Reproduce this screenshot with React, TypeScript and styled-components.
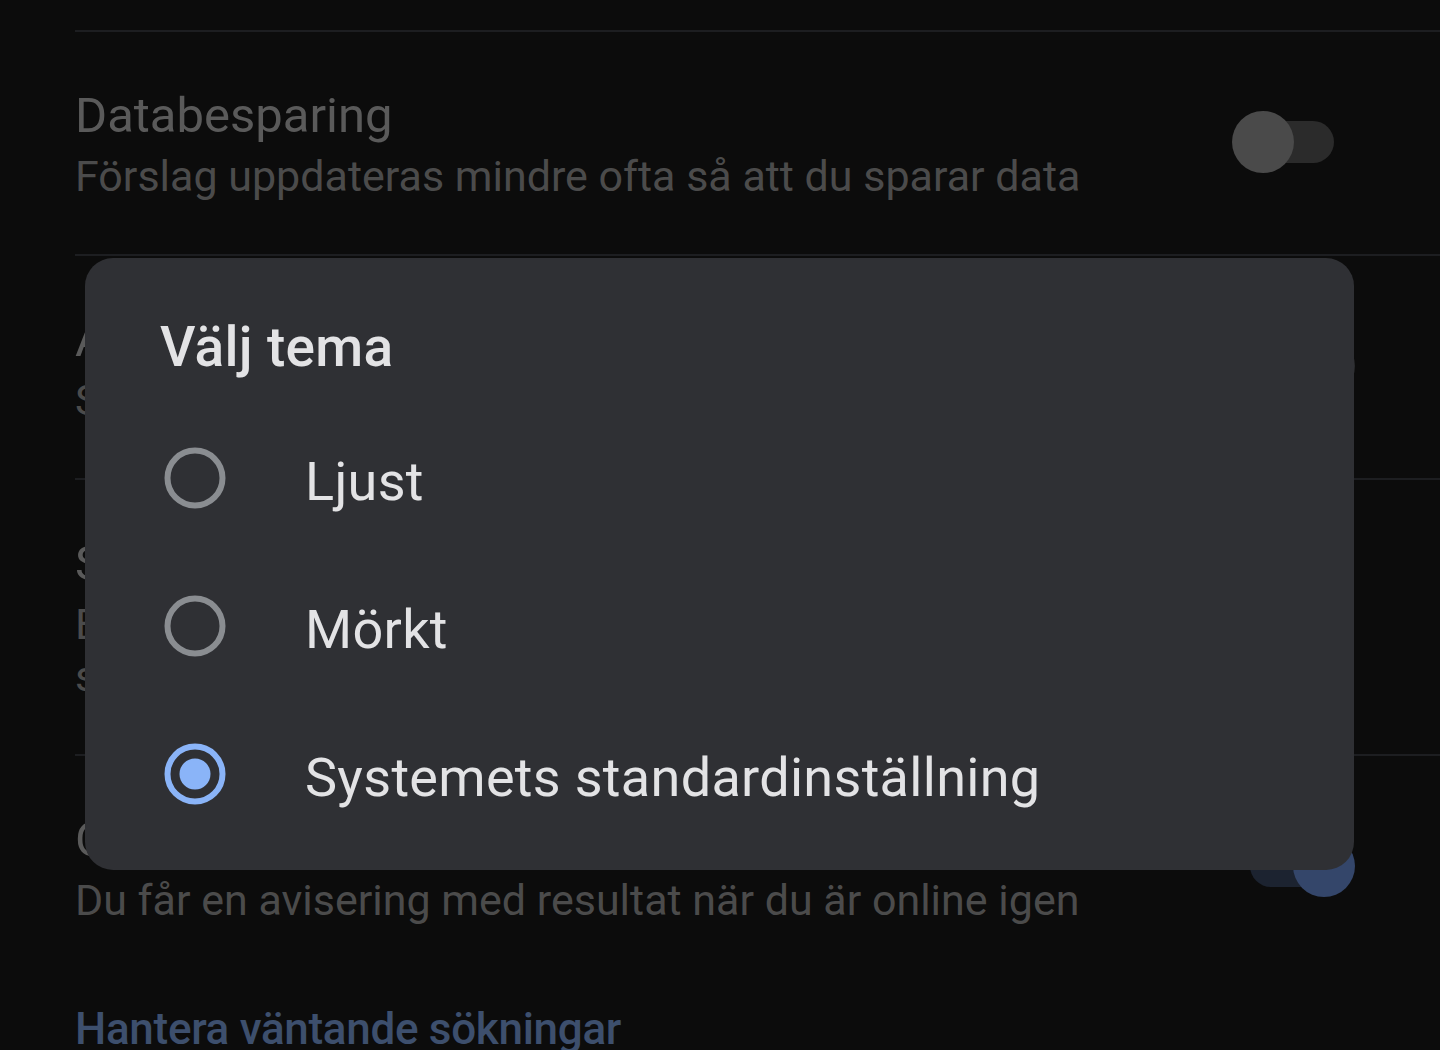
import React from "react";
import styled, { createGlobalStyle } from "styled-components";

const GlobalStyle = createGlobalStyle`
  html, body { margin: 0; padding: 0; background: #0c0c0c; }
  body {
    font-family: Roboto, "Noto Sans", "Liberation Sans", sans-serif;
    -webkit-font-smoothing: antialiased;
  }
  * { box-sizing: border-box; }
`;

const Screen = styled.div`
  position: relative;
  width: 1440px;
  height: 1050px;
  overflow: hidden;
  background: #0c0c0c;
`;

const SettingsList = styled.div`
  padding-top: 30px;
  padding-left: 75px;
`;

const Row = styled.div<{ $divider?: boolean }>`
  display: grid;
  grid-template-columns: 1fr auto;
  align-items: center;
  column-gap: 40px;
  padding: 50px 85px 52px 0;
  border-top: ${(p) => (p.$divider ? "2px solid #1d1e21" : "2px solid transparent")};
`;

const TextBlock = styled.div`
  display: flex;
  flex-direction: column;
  min-width: 0;
`;

const Title = styled.div`
  font-size: 49px;
  line-height: 68px;
  color: #5a5a5a;
  white-space: nowrap;
`;

const Subtitle = styled.div`
  font-size: 43px;
  line-height: 52px;
  color: #4b4b4b;
  white-space: nowrap;
`;

type Tone = "off" | "on" | "muted";

const trackColor: Record<Tone, string> = {
  off: "#2b2b2b",
  on: "#1c2330",
  muted: "#1a1b1c",
};
const thumbColor: Record<Tone, string> = {
  off: "#4a4a4a",
  on: "#34466a",
  muted: "#2a2b2d",
};

const Switch = styled.div`
  position: relative;
  width: 123px;
  height: 62px;
`;

const Track = styled.div<{ $tone: Tone }>`
  position: absolute;
  left: 18px;
  top: 10px;
  width: 84px;
  height: 42px;
  border-radius: 21px;
  background: ${(p) => trackColor[p.$tone]};
`;

const Thumb = styled.div<{ $tone: Tone; $on: boolean }>`
  position: absolute;
  top: 0;
  left: ${(p) => (p.$on ? 61 : 0)}px;
  width: 62px;
  height: 62px;
  border-radius: 50%;
  background: ${(p) => thumbColor[p.$tone]};
`;

const LinkText = styled.div`
  margin-top: 24px;
  padding-left: 75px;
  font-size: 44px;
  font-weight: 500;
  line-height: 54px;
  color: #3d4f6d;
  letter-spacing: -0.3px;
`;

const Dialog = styled.div`
  position: absolute;
  left: 85px;
  top: 258px;
  width: 1269px;
  height: 612px;
  background: #2f3034;
  border-radius: 28px;
  padding: 57px 0 22px;
  display: flex;
  flex-direction: column;
`;

const DialogTitle = styled.h2`
  margin: 0 0 25px 75px;
  font-size: 55px;
  font-weight: 500;
  line-height: 64px;
  color: #e3e3e5;
  letter-spacing: 0.3px;
`;

const OptionList = styled.div`
  display: flex;
  flex-direction: column;
`;

const Option = styled.label`
  display: flex;
  align-items: center;
  height: 148px;
  padding-left: 79px;
  gap: 80px;
  cursor: pointer;
`;

const OptionLabel = styled.span`
  font-size: 54px;
  line-height: 64px;
  color: #e3e3e5;
  padding-top: 8px;
  margin-left: -1px;
  letter-spacing: 0.3px;
`;

const RadioSvg = styled.svg`
  flex: none;
  display: block;
`;

function Toggle({ on, tone }: { on: boolean; tone: Tone }) {
  return (
    <Switch>
      <Track $tone={tone} />
      <Thumb $tone={tone} $on={on} />
    </Switch>
  );
}

function Radio({ checked }: { checked: boolean }) {
  const color = checked ? "#8ab4f8" : "#8a8d91";
  return (
    <RadioSvg width="62" height="62" viewBox="0 0 62 62">
      <circle cx="31" cy="31" r="27.5" fill="none" stroke={color} strokeWidth="6" />
      {checked && <circle cx="31" cy="31" r="15.5" fill={color} />}
    </RadioSvg>
  );
}

const settings = [
  {
    title: "Databesparing",
    lines: ["Förslag uppdateras mindre ofta så att du sparar data"],
    on: false,
    tone: "off" as Tone,
  },
  {
    title: "Automatisk uppspelning av video",
    lines: ["Spela upp förhandsvisningar automatiskt"],
    on: true,
    tone: "muted" as Tone,
  },
  {
    title: "Sökförslag offline",
    lines: ["Endast förslag från tidigare sökningar visas när du", "saknar internetanslutning"],
    on: false,
    tone: "muted" as Tone,
  },
  {
    title: "Offlinesökningar",
    lines: ["Du får en avisering med resultat när du är online igen"],
    on: true,
    tone: "on" as Tone,
  },
];

const options = ["Ljust", "Mörkt", "Systemets standardinställning"];

export default function App() {
  return (
    <>
      <GlobalStyle />
      <Screen>
        <SettingsList>
          {settings.map((s, i) => (
            <Row key={s.title} $divider={i < 4}>
              <TextBlock>
                <Title>{s.title}</Title>
                {s.lines.map((l) => (
                  <Subtitle key={l}>{l}</Subtitle>
                ))}
              </TextBlock>
              <Toggle on={s.on} tone={s.tone} />
            </Row>
          ))}
        </SettingsList>
        <LinkText>Hantera väntande sökningar</LinkText>

        <Dialog role="dialog" aria-label="Välj tema">
          <DialogTitle>Välj tema</DialogTitle>
          <OptionList>
            {options.map((o, i) => (
              <Option key={o}>
                <Radio checked={i === 2} />
                <OptionLabel>{o}</OptionLabel>
              </Option>
            ))}
          </OptionList>
        </Dialog>
      </Screen>
    </>
  );
}
